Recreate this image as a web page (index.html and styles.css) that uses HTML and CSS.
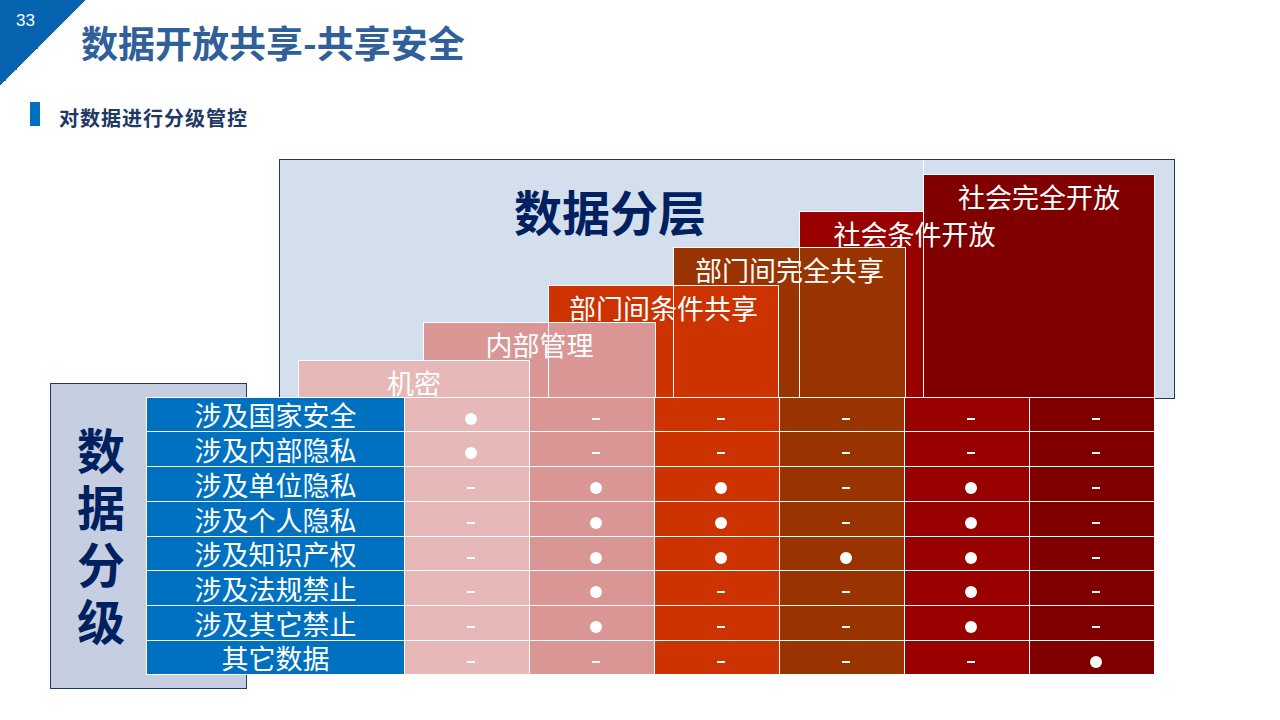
FILE: index.html
```html
<!DOCTYPE html>
<html lang="zh-CN">
<head>
<meta charset="utf-8">
<title>数据开放共享-共享安全</title>
<link rel="stylesheet" href="styles.css">
</head>
<body>
<div class="slide">
  <header class="top">
    <div class="page-no">33</div>
    <h1 class="title">数据开放共享-共享安全</h1>
  </header>

  <div class="sub">
    <span class="sub-bar"></span>
    <h2 class="sub-text">对数据进行分级管控</h2>
  </div>

  <section class="stage">
    <div class="panel">
      <div class="panel-title">数据分层</div>

      <div class="fill tier-5"></div>
      <div class="fill bordered tier-6"></div>
      <div class="seam"></div>
      <div class="fill tier-4"></div>
      <div class="fill tier-3"></div>
      <div class="fill tier-2"></div>

      <div class="outline tier-5 half"></div>
      <div class="outline tier-4"></div>
      <div class="outline tier-3"></div>
      <div class="outline tier-2"></div>

      <div class="fill bordered tier-1"></div>

      <div class="tag tier-1">机密</div>
      <div class="tag tier-2">内部管理</div>
      <div class="tag tier-3">部门间条件共享</div>
      <div class="tag tier-4">部门间完全共享</div>
      <div class="tag tier-5">社会条件开放</div>
      <div class="tag tier-6">社会完全开放</div>
    </div>

    <div class="lower">
      <div class="grade-box"><div class="grade-text">数据分级</div></div>

      <div class="matrix">
        <div class="label">涉及国家安全</div>
        <div class="cell c1"><i class="dot"></i></div>
        <div class="cell c2"><i class="dash"></i></div>
        <div class="cell c3"><i class="dash"></i></div>
        <div class="cell c4"><i class="dash"></i></div>
        <div class="cell c5"><i class="dash"></i></div>
        <div class="cell c6"><i class="dash"></i></div>

        <div class="label">涉及内部隐私</div>
        <div class="cell c1"><i class="dot"></i></div>
        <div class="cell c2"><i class="dash"></i></div>
        <div class="cell c3"><i class="dash"></i></div>
        <div class="cell c4"><i class="dash"></i></div>
        <div class="cell c5"><i class="dash"></i></div>
        <div class="cell c6"><i class="dash"></i></div>

        <div class="label">涉及单位隐私</div>
        <div class="cell c1"><i class="dash"></i></div>
        <div class="cell c2"><i class="dot"></i></div>
        <div class="cell c3"><i class="dot"></i></div>
        <div class="cell c4"><i class="dash"></i></div>
        <div class="cell c5"><i class="dot"></i></div>
        <div class="cell c6"><i class="dash"></i></div>

        <div class="label">涉及个人隐私</div>
        <div class="cell c1"><i class="dash"></i></div>
        <div class="cell c2"><i class="dot"></i></div>
        <div class="cell c3"><i class="dot"></i></div>
        <div class="cell c4"><i class="dash"></i></div>
        <div class="cell c5"><i class="dot"></i></div>
        <div class="cell c6"><i class="dash"></i></div>

        <div class="label">涉及知识产权</div>
        <div class="cell c1"><i class="dash"></i></div>
        <div class="cell c2"><i class="dot"></i></div>
        <div class="cell c3"><i class="dot"></i></div>
        <div class="cell c4"><i class="dot"></i></div>
        <div class="cell c5"><i class="dot"></i></div>
        <div class="cell c6"><i class="dash"></i></div>

        <div class="label">涉及法规禁止</div>
        <div class="cell c1"><i class="dash"></i></div>
        <div class="cell c2"><i class="dot"></i></div>
        <div class="cell c3"><i class="dash"></i></div>
        <div class="cell c4"><i class="dash"></i></div>
        <div class="cell c5"><i class="dot"></i></div>
        <div class="cell c6"><i class="dash"></i></div>

        <div class="label">涉及其它禁止</div>
        <div class="cell c1"><i class="dash"></i></div>
        <div class="cell c2"><i class="dot"></i></div>
        <div class="cell c3"><i class="dash"></i></div>
        <div class="cell c4"><i class="dash"></i></div>
        <div class="cell c5"><i class="dot"></i></div>
        <div class="cell c6"><i class="dash"></i></div>

        <div class="label">其它数据</div>
        <div class="cell c1"><i class="dash"></i></div>
        <div class="cell c2"><i class="dash"></i></div>
        <div class="cell c3"><i class="dash"></i></div>
        <div class="cell c4"><i class="dash"></i></div>
        <div class="cell c5"><i class="dash"></i></div>
        <div class="cell c6"><i class="dot"></i></div>
      </div>
    </div>
  </section>
</div>
</body>
</html>
```

FILE: styles.css
```css
* { box-sizing: border-box; }

body {
  margin: 0;
  background: #fff;
  font-family: "Noto Sans CJK SC", "Noto Sans", sans-serif;
}

.slide {
  width: 1280px;
  height: 720px;
  overflow: hidden;
  background:
    linear-gradient(135deg, #0563af 50%, transparent 50%) 0 0 / 86px 86px no-repeat,
    #fff;
}

/* header */
.top {
  display: flex;
  align-items: flex-start;
  height: 61px;
}
.page-no {
  flex: none;
  width: 81px;
  padding: 11px 0 0 16px;
  font: 17px/20px "Liberation Sans", Arial, sans-serif;
  color: #fff;
}
.title {
  margin: 24px 0 0;
  font-size: 37px;
  line-height: 37px;
  font-weight: 700;
  color: #30609a;
}

.sub {
  display: flex;
  align-items: flex-start;
  height: 26px;
  margin-top: 41px;
}
.sub-bar {
  flex: none;
  width: 10px;
  height: 24px;
  margin-left: 30px;
  background: #0070c0;
}
.sub-text {
  margin: 6px 0 0 19px;
  font-size: 20px;
  line-height: 20px;
  font-weight: 700;
  letter-spacing: 1px;
  color: #1f3864;
}

/* diagram */
.stage {
  margin-top: 31px;
  padding-left: 50px;
}
.panel {
  position: relative;
  margin-left: 229px;
  width: 896px;
  height: 240px;
  border: 1px solid #1f3864;
  background: #d4dfed;
}
.panel-title {
  padding: 26px 0 0 234px;
  font-size: 48px;
  line-height: 48px;
  font-weight: 700;
  color: #002060;
}

.tier-1 { --x: 18px;  --y: 200px; --w: 232px; --c: #e6b8b7; }
.tier-2 { --x: 143px; --y: 162px; --w: 233px; --c: #da9694; }
.tier-3 { --x: 268px; --y: 125px; --w: 231px; --c: #cc3300; }
.tier-4 { --x: 393px; --y: 87px;  --w: 233px; --c: #993300; }
.tier-5 { --x: 519px; --y: 51px;  --w: 231px; --c: #990000; }
.tier-6 { --x: 643px; --y: 14px;  --w: 232px; --c: #800000; }

.fill,
.outline,
.tag {
  position: absolute;
  left: var(--x);
  top: var(--y);
  width: var(--w);
  bottom: 0;
}
.fill { background: var(--c); }
.bordered,
.outline {
  border: 1px solid #fff;
  border-bottom: 0;
}
.outline.half {
  width: 125px;
  border-right: 0;
}
.seam {
  position: absolute;
  left: 643px;
  top: 0;
  width: 1px;
  height: 14px;
  background: #fff;
}
.tag {
  padding-top: 9px;
  text-align: center;
  white-space: nowrap;
  font-size: 27px;
  line-height: 27px;
  color: #fff;
}

.lower {
  display: flex;
  align-items: flex-start;
  margin-top: -16px;
}
.grade-box {
  flex: none;
  width: 197px;
  height: 306px;
  padding: 36px 0 0 26px;
  border: 1px solid #1f3864;
  background: #c5cfe1;
}
.grade-text {
  width: 48px;
  font-size: 48px;
  line-height: 57px;
  font-weight: 700;
  color: #002060;
}

.matrix {
  position: relative;
  flex: none;
  margin: 14px 0 0 -101px;
  display: grid;
  grid-template-columns: 257px repeat(6, 124px);
  grid-template-rows: 33px 34px 34px 34px 33px 34px 34px 33px;
  gap: 1px;
  padding: 1px;
  background: #fff;
}
.label {
  display: flex;
  align-items: center;
  justify-content: center;
  background: #0070c0;
  color: #fff;
  font-size: 27px;
  line-height: 27px;
  white-space: nowrap;
}
.cell {
  display: flex;
  align-items: center;
  justify-content: center;
  padding: 8px 0 0 8px;
}
.c1 { background: #e6b8b7; }
.c2 { background: #da9694; }
.c3 { background: #cc3300; }
.c4 { background: #993300; }
.c5 { background: #990000; }
.c6 { background: #800000; }

.dot {
  width: 12px;
  height: 12px;
  border-radius: 50%;
  background: #fff;
}
.dash {
  width: 8px;
  height: 2px;
  background: #fff;
}
```
